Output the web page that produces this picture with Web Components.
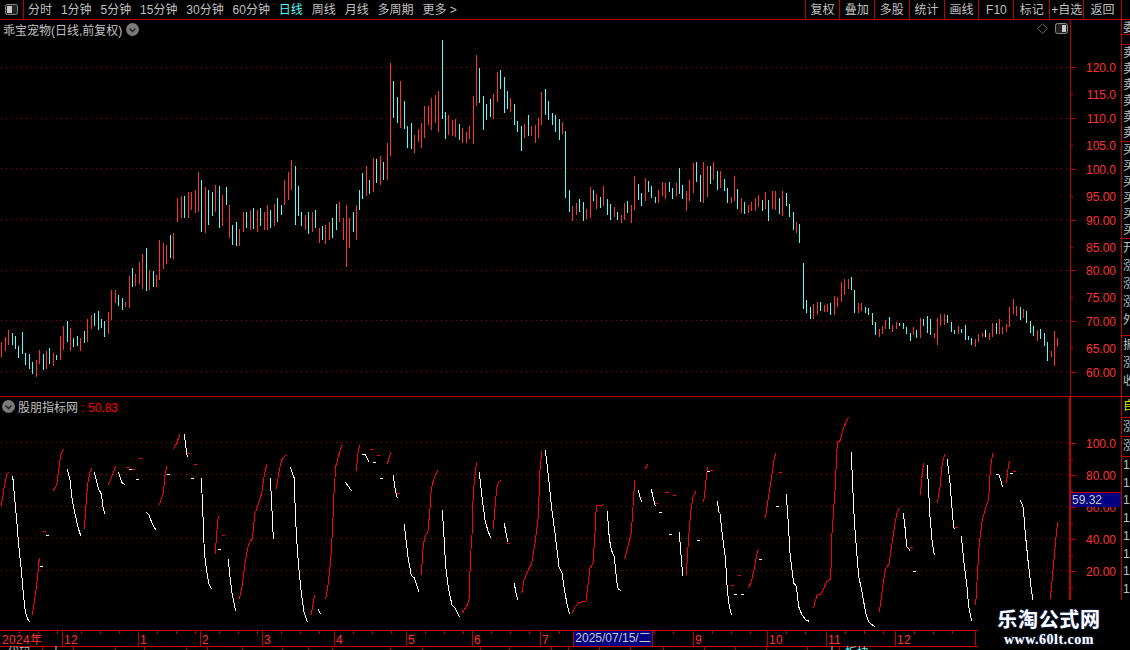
<!DOCTYPE html>
<html lang="zh">
<head>
<meta charset="utf-8">
<title>K线</title>
<style>
  html, body { margin: 0; height: 100%; background: #000; overflow: hidden; }
  body { font: 12px "Liberation Sans", "Noto Sans CJK SC", sans-serif; color: #c0c0c0; }
</style>
</head>
<body>
<tdx-app>
  <tdx-toolbar>
    <tdx-tab>分时</tdx-tab><tdx-tab>1分钟</tdx-tab><tdx-tab>5分钟</tdx-tab><tdx-tab>15分钟</tdx-tab>
    <tdx-tab>30分钟</tdx-tab><tdx-tab>60分钟</tdx-tab><tdx-tab active>日线</tdx-tab><tdx-tab>周线</tdx-tab>
    <tdx-tab>月线</tdx-tab><tdx-tab>多周期</tdx-tab><tdx-tab>更多 &gt;</tdx-tab>
    <tdx-tool slot="right" style="--w:34px">复权</tdx-tool>
    <tdx-tool slot="right" style="--w:35px">叠加</tdx-tool>
    <tdx-tool slot="right" style="--w:35px">多股</tdx-tool>
    <tdx-tool slot="right" style="--w:35px">统计</tdx-tool>
    <tdx-tool slot="right" style="--w:35px">画线</tdx-tool>
    <tdx-tool slot="right" style="--w:35px">F10</tdx-tool>
    <tdx-tool slot="right" style="--w:36px">标记</tdx-tool>
    <tdx-tool slot="right" style="--w:34px">+自选</tdx-tool>
    <tdx-tool slot="right" style="--w:38px">返回</tdx-tool>
  </tdx-toolbar>

  <tdx-pane style="--h:377px">
    <tdx-price-plot></tdx-price-plot>
    <tdx-title-bar icons>
      <span>乖宝宠物(日线,前复权)</span>
    </tdx-title-bar>
    <tdx-axis slot="axis" top="20" labels="120.0@67 115.0@94 110.0@118 105.0@145 100.0@169 95.00@196 90.00@220 85.00@247 80.00@270 75.00@297 70.00@321 65.00@348 60.00@372"></tdx-axis>
  </tdx-pane>

  <tdx-pane style="--h:233px" last>
    <tdx-osc-plot></tdx-osc-plot>
    <tdx-title-bar lead>
      <span>股朋指标网</span><span style="color:#f00"> : 50.83</span>
    </tdx-title-bar>
    <tdx-axis slot="axis" top="397" labels="100.0@443 80.00@475 60.00@507 40.00@539 20.00@571" current="59.32"></tdx-axis>
  </tdx-pane>

  <tdx-date-axis></tdx-date-axis>
  <tdx-strip></tdx-strip>
  <tdx-watermark></tdx-watermark>
</tdx-app>

<script>
const UI_FONT = '"Liberation Sans", "Noto Sans CJK SC", sans-serif';
const LINE = '#c00000';

// bars traced off the chart: colour+x,top,bottom. each group has its own origin, scale 3
const BAR_GROUPS = [
  [0, 250, 3, `r4,276,320 r16,262,302 r26,240,285 c37,250,285 c46,258,298 c55,288,323 c67,246,312 c76,310,344 c87,313,356 c97,336,372 r109,330,380 r118,300,342 c130,312,360 r139,304,356 c148,294,342 r160,310,348 c169,315,330 r181,258,330 r190,228,300 c202,213,276 r211,234,303 c220,264,291 c232,258,288 r241,264,303 c253,243,279 r262,207,276 r274,195,237 c283,189,228 c295,183,240 c304,207,234 c313,213,261 r325,186,252 r334,120,210 r346,120,159 c355,135,168 c367,144,180 r376,156,171 r388,78,174 c397,54,111 r406,72,108 r418,36,102 r427,12,117 c439,-6,123 r448,60,120 c460,63,111 r469,75,111 r478,-30,90 r490,-21,57 r499,-15,42 c511,-45,24 r520,-51,27`],
  [0, 0, 1, `r177,198,222 r181,196,218 c184,196,218 r188,192,218 r191,192,210 r195,190,213 r198,172,212 c201,180,232 r205,187,233 c208,190,225 c212,192,216 r215,185,212 c219,186,228 r222,195,226 c226,187,205 r229,205,238 c232,225,245 c236,222,246 r239,229,246 r243,212,232 c246,212,228 r250,210,230 c253,208,229 r257,210,232 c260,208,226 r264,212,230 r267,205,230 c270,210,228 r274,204,226 c277,198,222 c281,205,215 r284,180,205 r288,172,200 r291,160,190 c295,166,225 c298,186,216 c301,212,226 r305,215,230 c308,212,234 r312,212,232 c315,210,228 r319,228,243 c322,226,240 r325,225,244 r329,222,240 c332,218,238 c336,204,230 r339,202,222 r343,218,240 r346,205,267 r349,218,248 c353,212,232 r356,205,240 c359,190,210`],
  [360, 30, 3, `c7,430,507 r19,408,498 c28,450,492 r40,384,486 c49,387,459 r61,378,465 c70,396,450 r82,339,450 r91,99,378 c100,153,264 c112,201,279 r121,153,294 c133,213,297 c142,288,354 c154,279,357 r163,315,369 r175,297,336 r184,279,354 r193,228,324 r205,228,285 r214,204,300 r226,195,279 r235,183,306 c247,30,267 c256,246,327 r265,255,315 r277,270,318 r286,267,321 c298,282,330 r307,294,339 r319,306,339 r328,288,327 r340,198,342 r349,75,228 c358,114,219 c370,198,300 c379,222,270 c391,207,261 r400,192,267 r412,126,216 c421,120,177 c433,141,249 c442,183,237 r451,204,246 c463,222,285 c472,273,306 c484,288,363 r493,282,324 c505,255,318 r514,288,318 r526,285,339 r535,264,324 r544,186,285 c556,177,255 c565,213,270 c577,249,285 c586,255,306 c598,267,330 r607,276,312 c616,303,504 c628,480,546 r637,528,573 r649,519,555 c658,507,546 c670,516,573 r679,537,567 r691,471,564 c700,480,513 r709,492,537 c721,501,534 r730,468,528 c742,507,555 c751,522,570 r763,531,561 c772,546,570 r784,555,579 r793,519,570 c802,513,549 r814,525,579 r823,438,540 c835,462,510 c844,489,528 r856,444,513 c865,453,486 c874,468,504 c886,501,519 r895,480,519 r907,456,498 r916,459,507 c928,456,486 c937,474,507 r949,459,498 c958,414,492 c967,465,507 r979,483,543 r988,450,513 r1000,399,489 c1009,396,456 c1021,435,516 r1030,396,519 r1042,408,501 c1051,408,462 r1060,396,450 c1072,423,480`],
  [720, 150, 3, `r1,63,114 c13,87,123 c22,114,159 r34,141,159 r43,78,153 c52,117,177 r64,144,189 c73,156,192 r85,165,189 r94,156,183 r106,144,183 r115,135,171 c127,150,183 r136,126,177 c145,150,213 r157,123,177 r166,123,180 c178,144,192 r187,123,198 c199,129,168 c208,162,201 c220,186,240 r229,216,249 c238,222,279 c250,339,477 c259,450,489 c271,471,507 r280,462,507 r292,456,495 c301,456,483 r313,465,486 r322,462,486 c331,459,495 r343,438,495 r352,441,471 r364,396,456 r373,387,435 r385,387,417 c394,381,420 c403,420,489 r415,459,489 r424,459,483 c436,471,489 c445,474,495 c457,489,525 c466,516,555 r478,537,561 r487,528,552 r496,510,537 c508,501,537 r517,525,546 r529,516,537 c538,519,528 c550,519,537 c559,531,552 c571,549,573 r580,531,555 c589,540,564 r601,504,564 c610,507,528 c622,498,549 c631,507,555 r643,549,564 r652,504,585 r661,492,528 r673,492,525 c682,495,519 c694,516,546 c703,540,552 r715,528,552 c724,537,549 c736,525,570 c745,558,570 c754,564,585 r766,567,591 r775,552,576 r787,549,561 w796,540,561 r808,549,570 r817,519,561 c829,519,552 r838,507,552 r847,531,552 r859,522,546 r868,471,531 r880,447,492 r889,468,498 c901,471,510 r910,477,504 c919,483,519 c931,513,549 c940,528,558 r952,540,573 c961,537,567 c973,549,588 c982,576,633 r994,603,621 r1003,543,648 r1012,564,591`]
];

// oscillator fragments, same idea: colour then points, | between fragments
const OSC_GROUPS = [
  [0, 420, `r 4,258 12,205 20,163 26,156|w 38,168 44,235 50,300 56,375 64,450 70,520 76,575 82,595 88,605|r 97,585 106,525 112,480 118,415|w 120,439 129,439|r 129,334 138,334|w 138,346 147,346|r 160,212 170,195 176,150 182,105 190,88|w 202,148 210,180 217,240 226,285 235,325 242,347|r 253,328 260,225 264,185 270,155 276,145|w 283,156 295,205 304,222 309,260 314,282|r 325,195 335,170 347,139|w 355,156 365,187 374,194|r 378,142 387,142|w 387,148 396,148|r 396,148 405,148|w 408,178 417,178|r 417,115 426,115|w 439,277 447,285 456,310 467,329|r 478,255 490,220 495,165 500,139|w 501,163 510,163|r 520,88 530,70 540,42|w 553,42 558,85 562,110|r 562,100 571,100|w 574,175 582,175|r 582,133 591,133|w 604,175 606,220 609,290 612,370 615,415 622,465 628,495 634,506|r 646,401 650,340 655,288|w 654,388 663,388|r 666,346 675,346|w 685,418 690,470 696,520 702,550 707,572|r 718,538 726,500 735,430 745,375 757,355 765,280 772,262 785,220 792,170 800,133|w 811,175 815,250 818,325 821,356|r 829,207 838,150 845,120 852,110 860,106|w 871,142 883,175 886,280 890,360 896,440 904,520 912,575 922,605|r 934,585 940,545 944,526|w 955,568 962,582|r 977,536 985,490 992,420 998,320 1002,220 1007,140 1015,110 1027,73|w 1036,187 1045,199 1054,212|r 1069,152 1075,90 1080,76`],
  [360, 420, `w 7,103 16,104 22,115 28,127|w 39,127 48,127|r 30,88 39,88|r 51,106 60,106|w 60,175 69,175|r 82,133 88,110 93,97|w 100,166 106,210 112,235|r 111,220 120,220|w 133,313 138,360 144,410 154,467 163,473 170,495 176,515|r 184,464 190,375 195,350 204,333 210,265 214,205 224,170 233,151|w 247,271 252,350 257,440 266,510 276,555 286,565 298,590|r 307,578 322,555 328,535 331,420 336,345 340,215 346,155 350,127|w 358,157 367,240 376,305 385,335 392,353|r 400,326 406,250 411,200 416,188 422,181|w 433,310 438,340 444,367|r 441,370 450,370|w 463,490 468,520 473,540|r 485,520 492,480 505,450 515,430 525,370 535,290 540,150 545,94|w 556,91 565,165 575,265 585,340 597,440 606,460 615,520 622,555 629,583|r 637,578 646,560 657,548 678,543 685,490 690,445 699,430 705,340 709,257 722,257 728,253|w 742,274 748,355 754,390 763,410 771,490 775,507 782,511|r 794,418 806,370 814,340 819,260 824,181|r 856,146 864,133|w 835,211 840,232 845,247|w 874,208 880,235 886,258|r 885,251 894,251|w 897,277 906,277|r 915,217 927,217|r 939,226 948,226|w 927,343 936,343|w 958,337 963,405 968,467|r 979,464 983,395 987,340 993,270 999,230 1007,214|w 1011,361 1020,361|r 1031,247 1038,180 1043,142|w 1041,154 1050,154|r 1050,151 1059,151|w 1072,244 1078,280`],
  [720, 410, `w 0,313 8,385 16,440 22,540 28,590 35,616|r 33,526 42,526|r 54,496 63,496|w 42,553 51,553|w 63,553 72,553|r 85,535 95,512 105,465 113,420 116,418|w 117,448 126,448|r 136,325 145,265 155,200 162,150 167,130|r 177,187 186,187|w 168,289 177,289|w 199,253 205,340 210,430 216,480 221,520 229,528 236,590 246,615 258,630 268,634|r 280,595 292,553 303,553 320,515 332,507 336,370 345,240 352,100 360,92 370,55 385,22|w 394,127 398,230 403,330 408,400 416,500 425,540 437,610 446,636 464,650|r 478,607 490,520 496,478 507,462 516,400 525,340 531,310 538,295|w 550,310 556,360 560,410 570,421|r 570,412 579,412|w 579,484 588,484|r 601,254 607,190 611,160|w 622,166 630,320 637,400 643,434|r 652,280 660,230 667,160 674,133|w 682,148 690,220 700,340 703,358|r 705,352 714,352|w 724,379 732,460 741,530 746,590 755,634|r 767,585 771,515 778,400 787,330 795,300 806,267 811,180 818,130|w 828,193 837,195 842,210 848,232|r 859,218 865,170 868,154|w 870,190 879,190|r 879,184 888,184|w 901,271 910,292 916,370 925,460 933,530 938,569|r 991,568 1000,470 1008,380 1013,337`]
];

function gridLines(ys) {
  return ys.map(y => `<line x1="1" x2="1070" y1="${y + .5}" y2="${y + .5}" stroke="#a00000" stroke-dasharray="1 4"/>`).join('');
}

class TdxApp extends HTMLElement {
  constructor() {
    super();
    this.attachShadow({ mode: 'open' }).innerHTML = `
      <style>
        :host { display: grid; grid-template-columns: 1122px 8px; grid-template-rows: 20px 377px 233px 20px;
                width: 1130px; height: 650px; position: relative; overflow: hidden; background: #000; }
        ::slotted(tdx-toolbar) { grid-column: 1 / 3; grid-row: 1; }
        ::slotted(tdx-strip) { grid-column: 2; grid-row: 2 / 5; }
        ::slotted(tdx-date-axis) { grid-column: 1; grid-row: 4; }
      </style>
      <slot></slot>`;
  }
}

class TdxToolbar extends HTMLElement {
  constructor() {
    super();
    this.attachShadow({ mode: 'open' }).innerHTML = `
      <style>
        :host { display: flex; height: 20px; box-sizing: border-box; border-bottom: 1px solid ${LINE}; font: 12px ${UI_FONT}; }
        .side { width: 23px; border-right: 1px solid ${LINE}; display: flex; align-items: center; justify-content: center; }
        .tabs { display: flex; gap: 8.9px; padding-left: 4px; flex: 1; align-items: flex-start; }
        .right { display: flex; width: 317px; box-sizing: border-box; border-right: 1px solid ${LINE}; margin-right: 8px; }
      </style>
      <div class="side">
        <svg width="13" height="11" viewBox="0 0 13 11"><rect x=".5" y=".5" width="12" height="10" rx="2" fill="#222" stroke="#888"/><rect x="2" y="2" width="5" height="7" fill="#c8c8c8"/></svg>
      </div>
      <div class="tabs"><slot></slot></div>
      <div class="right"><slot name="right"></slot></div>`;
  }
}

class TdxTab extends HTMLElement {
  constructor() {
    super();
    this.attachShadow({ mode: 'open' }).innerHTML = `
      <style>
        :host { display: block; color: #c0c0c0; height: 19px; line-height: 21px; white-space: nowrap; }
        :host([active]) { color: #54fcfc; }
      </style>
      <slot></slot>`;
  }
}

class TdxTool extends HTMLElement {
  constructor() {
    super();
    this.attachShadow({ mode: 'open' }).innerHTML = `
      <style>
        :host { display: block; width: var(--w); height: 19px; box-sizing: border-box; border-left: 1px solid ${LINE};
                text-align: center; line-height: 21px; color: #c0c0c0; white-space: nowrap; }
      </style>
      <slot></slot>`;
  }
}

class TdxPane extends HTMLElement {
  constructor() {
    super();
    this.attachShadow({ mode: 'open' }).innerHTML = `
      <style>
        :host { display: grid; grid-template-columns: 1070px 52px; height: var(--h); box-sizing: border-box;
                border-bottom: 1px solid ${LINE}; position: relative; }
        :host([last]) { border-bottom: 0; }
        .plot { position: relative; overflow: hidden; }
      </style>
      <div class="plot"><slot></slot></div>
      <slot name="axis"></slot>`;
  }
}

class TdxTitleBar extends HTMLElement {
  constructor() {
    super();
    const chevron = `<svg width="13" height="13" viewBox="0 0 13 13"><circle cx="6.5" cy="6.5" r="6.5" fill="#7a7a7a"/><path d="M3.5 5.5l3 3 3-3" fill="none" stroke="#222" stroke-width="1.4"/></svg>`;
    const lead = this.hasAttribute('lead');
    this.attachShadow({ mode: 'open' }).innerHTML = `
      <style>
        :host { position: absolute; left: 0; right: 0; top: 0; height: 18px; display: flex; align-items: center;
                padding: ${lead ? '0 0 0 2px' : '0 0 0 3px'}; box-sizing: border-box; gap: ${lead ? '3px' : '4px'}; color: #c0c0c0; font: 12px ${UI_FONT}; }
        .icons { position: absolute; right: 2px; top: 3px; display: flex; align-items: center; gap: 7px; }
      </style>
      ${lead ? chevron : ''}
      <span><slot></slot></span>
      ${lead ? '' : chevron}
      ${this.hasAttribute('icons') ? `<div class="icons">
        <svg width="11" height="11" viewBox="0 0 11 11"><path d="M5.5.7l4.8 4.8-4.8 4.8L.7 5.5z" fill="none" stroke="#6a6a6a"/></svg>
        <svg width="13" height="11" viewBox="0 0 13 11"><rect x=".5" y=".5" width="12" height="10" rx="2" fill="#222" stroke="#888"/><rect x="7" y="2" width="4" height="7" fill="#c8c8c8"/></svg>
      </div>` : ''}`;
  }
}

class TdxPricePlot extends HTMLElement {
  constructor() {
    super();
    let bars = '';
    const colors = { r: '#ff3232', c: '#54fcfc', w: '#fff' };
    for (const [ox, oy, scale, data] of BAR_GROUPS) {
      for (const m of data.matchAll(/([rcw])(-?\d+),(-?\d+),(-?\d+)/g)) {
        const x = Math.floor(ox + m[2] / scale);
        const y1 = Math.round(oy + m[3] / scale);
        const y2 = Math.round(oy + m[4] / scale);
        bars += `<rect x="${x}" y="${y1}" width="1" height="${y2 - y1}" fill="${colors[m[1]]}"/>`;
      }
    }
    this.attachShadow({ mode: 'open' }).innerHTML = `
      <style>
        :host { display: block; }
        svg { display: block; }
      </style>
      <svg width="1070" height="376" viewBox="0 20 1070 376" shape-rendering="crispEdges">
        ${gridLines([67, 118, 168, 219, 270, 320, 371])}
        ${bars}
      </svg>`;
  }
}

class TdxOscPlot extends HTMLElement {
  constructor() {
    super();
    let lines = '';
    for (const [ox, oy, data] of OSC_GROUPS) {
      for (const part of data.split('|')) {
        const [kind, ...pts] = part.split(' ');
        const points = pts.map(p => {
          const [x, y] = p.split(',');
          return `${(ox + x / 3).toFixed(1)},${(oy + y / 3).toFixed(1)}`;
        }).join(' ');
        lines += `<polyline points="${points}" fill="none" stroke="${kind === 'r' ? '#f00' : '#fff'}" stroke-width="1"/>`;
      }
    }
    this.attachShadow({ mode: 'open' }).innerHTML = `
      <style>
        :host { display: block; }
        svg { display: block; }
      </style>
      <svg width="1070" height="233" viewBox="0 397 1070 233" shape-rendering="crispEdges">
        ${gridLines([442, 474, 506, 538, 570])}
        ${lines}
      </svg>`;
  }
}

class TdxAxis extends HTMLElement {
  constructor() {
    super();
    const top = +this.getAttribute('top');
    const labels = this.getAttribute('labels').split(' ').map(s => s.split('@'));
    const current = this.getAttribute('current');
    let html = '';
    labels.forEach(([text, y], i) => {
      const minor = top === 20 && i % 2 === 1;
      html += `<i class="${minor ? 'minor' : ''}" style="top:${y - top}px"></i>`;
      html += `<span style="top:${y - top - 7}px">${text}</span>`;
      if (top !== 20) html += `<i class="minor" style="top:${y - top + 16}px"></i>`;
    });
    this.attachShadow({ mode: 'open' }).innerHTML = `
      <style>
        :host { display: block; position: relative; border-left: ${current ? 2 : 1}px solid ${LINE}; margin-left: ${current ? -1 : 0}px;
                font: 12px ${UI_FONT}; color: #ff3232; overflow: hidden; }
        span { position: absolute; right: 6px; line-height: 16px; }
        i { position: absolute; left: 0; width: 5px; height: 1px; background: ${LINE}; }
        i.minor { width: 2px; }
        .current { position: absolute; left: 0; right: 1px; top: 95px; height: 15px; box-sizing: border-box; background: #000080;
                   border-top: 1px solid ${LINE}; color: #c8c8c8; line-height: 15px; padding-left: 1px; }
      </style>
      ${html}
      ${current ? `<div class="current">${current}</div>` : ''}`;
  }
}

class TdxDateAxis extends HTMLElement {
  constructor() {
    super();
    const marks = [[62, '12'], [138, '1'], [200, '2'], [262, '3'], [334, '4'], [406, '5'], [472, '6'], [540, '7'], [693, '9'], [767, '10'], [826, '11'], [895, '12'], [975, '1']];
    const starts = [0, 62, 138, 200, 262, 334, 406, 472, 540, 693, 767, 826, 895, 975];
    let html = '<b style="left:2px">2024年</b>';
    for (const [x, text] of marks) html += `<u style="left:${x}px"></u><b style="left:${x + 2}px">${text}</b>`;
    let ticks = '';
    for (let i = 0; i < starts.length - 1; i++) {
      for (let x = starts[i] + 19; x < starts[i + 1] - 4; x += 19) ticks += `<i style="left:${x}px"></i>`;
    }
    const lower = [42, 73, 115, 144, 186, 207, 242, 282, 308, 332, 390, 422, 480, 509, 551, 568, 599, 630, 663, 704, 735, 766, 807, 839];
    this.attachShadow({ mode: 'open' }).innerHTML = `
      <style>
        :host { display: block; position: relative; height: 20px; font: 12px ${UI_FONT}; color: #ff3232; }
        .bar { position: absolute; left: 0; right: 0; top: 0; height: 17px; box-sizing: border-box;
               border-top: 1px solid ${LINE}; border-bottom: 1px solid ${LINE}; }
        b { position: absolute; top: 1px; font-weight: normal; line-height: 16px; letter-spacing: .3px; }
        u { position: absolute; top: 0; bottom: 0; width: 1px; background: ${LINE}; }
        i { position: absolute; top: 0; width: 1px; height: 3px; background: ${LINE}; }
        .date { position: absolute; left: 574px; top: 0; width: 78px; height: 15px; background: #000080; color: #c8c8c8;
                line-height: 15px; text-align: center; white-space: nowrap; outline: 1px solid ${LINE}; }
        .foot u { top: 16px; height: 4px; bottom: auto; }
        .foot span { position: absolute; top: 17px; line-height: 12px; color: #c0c0c0; white-space: nowrap; }
      </style>
      <div class="bar">${html}${ticks}<div class="date">2025/07/15/二</div></div>
      <div class="foot">${lower.map(x => `<u style="left:${x}px"></u>`).join('')}
        <span style="left:7px">代码</span><span style="left:50px">大</span>
        <span style="left:826px">大</span><span style="left:845px;color:#54fcfc">板块</span></div>`;
  }
}

class TdxStrip extends HTMLElement {
  constructor() {
    super();
    const groups = [
      [15, 16, '委'], [10, 16, ''], [97, 16, '卖卖卖卖卖卖'], [97, 16, '买买买买买买'],
      [97, 18, '开涨涨涨外'], [61, 18, '振涨收'], [21, 18, '自'], [19, 18, '涨'], [20, 18, '涨'], [160, 17.7, '1111111111']
    ];
    const html = groups.map(([h, lh, text]) => `<div class="${text === '自' ? 'yellow' : ''}" style="height:${h}px;line-height:${lh}px">${text.split('').join('<br>')}</div>`).join('');
    this.attachShadow({ mode: 'open' }).innerHTML = `
      <style>
        :host { display: block; overflow: hidden; border-left: 1px solid ${LINE}; margin-left: -1px; font: 12px ${UI_FONT}; color: #c0c0c0; }
        div { box-sizing: border-box; border-bottom: 1px solid ${LINE}; overflow: hidden; padding-left: 1px; white-space: nowrap; }
        div:last-child { border-bottom: 0; }
        .yellow { color: #e0e000; }
      </style>
      ${html}`;
  }
}

class TdxWatermark extends HTMLElement {
  constructor() {
    super();
    this.attachShadow({ mode: 'open' }).innerHTML = `
      <style>
        :host { position: absolute; right: 0; bottom: 0; width: 152px; height: 50px; background: #000; color: #fff;
                display: flex; flex-direction: column; align-items: center; padding: 8px 10px 0 0; box-sizing: border-box;
                text-shadow: 0 0 2px #3a5ab0; }
        .name { font: bold 20px/22px "Noto Sans CJK SC", sans-serif; letter-spacing: .7px; }
        .url { font: bold 14px/16px "Liberation Serif", serif; letter-spacing: .5px; margin-top: 2px; }
      </style>
      <div class="name">乐淘公式网</div>
      <div class="url">www.60lt.com</div>`;
  }
}

customElements.define('tdx-app', TdxApp);
customElements.define('tdx-toolbar', TdxToolbar);
customElements.define('tdx-tab', TdxTab);
customElements.define('tdx-tool', TdxTool);
customElements.define('tdx-pane', TdxPane);
customElements.define('tdx-title-bar', TdxTitleBar);
customElements.define('tdx-price-plot', TdxPricePlot);
customElements.define('tdx-osc-plot', TdxOscPlot);
customElements.define('tdx-axis', TdxAxis);
customElements.define('tdx-date-axis', TdxDateAxis);
customElements.define('tdx-strip', TdxStrip);
customElements.define('tdx-watermark', TdxWatermark);
</script>
</body>
</html>
